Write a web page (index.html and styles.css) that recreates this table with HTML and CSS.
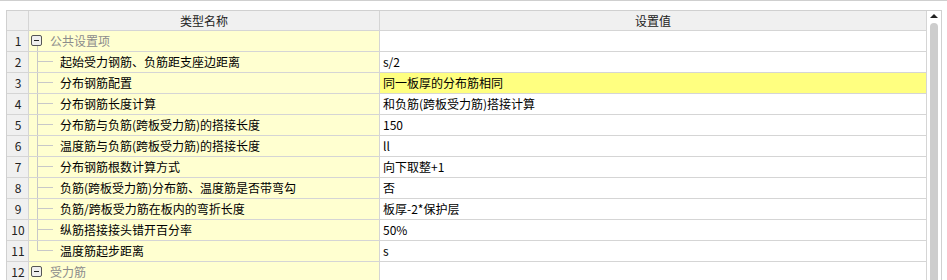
FILE: index.html
```html
<!DOCTYPE html>
<html lang="zh-CN">
<head>
<meta charset="utf-8">
<title>设置</title>
<link rel="stylesheet" href="styles.css">
</head>
<body>
<div class="topbar"></div>
<div class="panel">
  <div class="grid">
    <div class="row head">
      <div class="c num"></div>
      <div class="c name center">类型名称</div>
      <div class="c val center">设置值</div>
    </div>
    <div class="row">
      <div class="c num">1</div>
      <div class="c name group first"><span class="toggle"></span>公共设置项</div>
      <div class="c val"></div>
    </div>
    <div class="row">
      <div class="c num">2</div>
      <div class="c name child">起始受力钢筋、负筋距支座边距离</div>
      <div class="c val">s/2</div>
    </div>
    <div class="row">
      <div class="c num">3</div>
      <div class="c name child">分布钢筋配置</div>
      <div class="c val hl">同一板厚的分布筋相同</div>
    </div>
    <div class="row">
      <div class="c num">4</div>
      <div class="c name child">分布钢筋长度计算</div>
      <div class="c val">和负筋(跨板受力筋)搭接计算</div>
    </div>
    <div class="row">
      <div class="c num">5</div>
      <div class="c name child">分布筋与负筋(跨板受力筋)的搭接长度</div>
      <div class="c val">150</div>
    </div>
    <div class="row">
      <div class="c num">6</div>
      <div class="c name child">温度筋与负筋(跨板受力筋)的搭接长度</div>
      <div class="c val">ll</div>
    </div>
    <div class="row">
      <div class="c num">7</div>
      <div class="c name child">分布钢筋根数计算方式</div>
      <div class="c val">向下取整+1</div>
    </div>
    <div class="row">
      <div class="c num">8</div>
      <div class="c name child">负筋(跨板受力筋)分布筋、温度筋是否带弯勾</div>
      <div class="c val">否</div>
    </div>
    <div class="row">
      <div class="c num">9</div>
      <div class="c name child">负筋/跨板受力筋在板内的弯折长度</div>
      <div class="c val">板厚-2*保护层</div>
    </div>
    <div class="row">
      <div class="c num">10</div>
      <div class="c name child">纵筋搭接接头错开百分率</div>
      <div class="c val">50%</div>
    </div>
    <div class="row">
      <div class="c num">11</div>
      <div class="c name child last">温度筋起步距离</div>
      <div class="c val">s</div>
    </div>
    <div class="row">
      <div class="c num">12</div>
      <div class="c name group"><span class="toggle"></span>受力筋</div>
      <div class="c val"></div>
    </div>
  </div>
  <div class="scroll">
    <div class="arrow"></div>
    <div class="thumb"></div>
  </div>
</div>
</body>
</html>
```

FILE: styles.css
```css
html, body {
  margin: 0;
  padding: 0;
  background: #ffffff;
  overflow: hidden;
}

body {
  font-family: "Noto Sans CJK SC", "Microsoft YaHei", sans-serif;
  font-size: 12px;
  color: #000;
}

.topbar {
  height: 9px;
  border-top: 1px solid #cfcfcf;
}

/* the panel continues below the window; clip it at the bottom edge */
.panel {
  margin-left: 6px;
  width: 936px;
  height: 270px;
  overflow: hidden;
  box-sizing: border-box;
  border: 1px solid #d0d0d0;
  border-bottom: none;
  display: flex;
}

.grid {
  width: 920px;
  display: flex;
  flex-direction: column;
}

.row {
  display: flex;
  height: 21px;
  flex: none;
}

.row.head {
  height: 20px;
}

.c {
  box-sizing: border-box;
  border-right: 1px solid #d5d5d5;
  border-bottom: 1px solid #d5d5d5;
  line-height: 20px;
  white-space: nowrap;
  overflow: hidden;
}

.head .c {
  background: #f0f0f0;
  line-height: 19px;
  color: #222;
}

.num {
  width: 22px;
  background: #f0f0f0;
  text-align: center;
  color: #222;
  padding-left: 1px;
}

.name {
  width: 351px;
  background: #ffffd0;
  position: relative;
}

.val {
  width: 547px;
  padding-left: 3px;
}

.center {
  text-align: center;
  padding-left: 0;
}

.val.hl {
  background: #ffff80;
}

/* group rows: expand box plus grey caption */
.group {
  color: #8c8c8c;
  padding-left: 21px;
}

.toggle {
  position: absolute;
  left: 2px;
  top: 4px;
  width: 11px;
  height: 11px;
  box-sizing: border-box;
  border: 1px solid #555;
  border-radius: 2px;
  background: #efefef;
}

.toggle::after {
  content: "";
  position: absolute;
  left: 2px;
  top: 4px;
  width: 5px;
  height: 1px;
  background: #222;
}

/* tree connector from the group box down to the last child */
.group.first::after {
  content: "";
  position: absolute;
  left: 8px;
  top: 15px;
  bottom: -1px;
  width: 1px;
  background: #c8c8c8;
}

.child {
  padding-left: 31px;
}

.child::before {
  content: "";
  position: absolute;
  left: 8px;
  top: 0;
  bottom: -1px;
  width: 1px;
  background: #c8c8c8;
}

.child.last::before {
  bottom: 10px;
}

.child::after {
  content: "";
  position: absolute;
  left: 8px;
  top: 9px;
  width: 16px;
  height: 1px;
  background: #c8c8c8;
}

/* vertical scrollbar */
.scroll {
  width: 14px;
  position: relative;
}

.arrow {
  margin: 3px 0 0 3px;
  width: 0;
  height: 0;
  border-left: 4px solid transparent;
  border-right: 4px solid transparent;
  border-bottom: 4px solid #222;
}

.thumb {
  margin: 5px 0 0 3px;
  width: 8px;
  height: 300px;
  background: #cdcdcd;
  border-radius: 4px 4px 0 0;
}
```
